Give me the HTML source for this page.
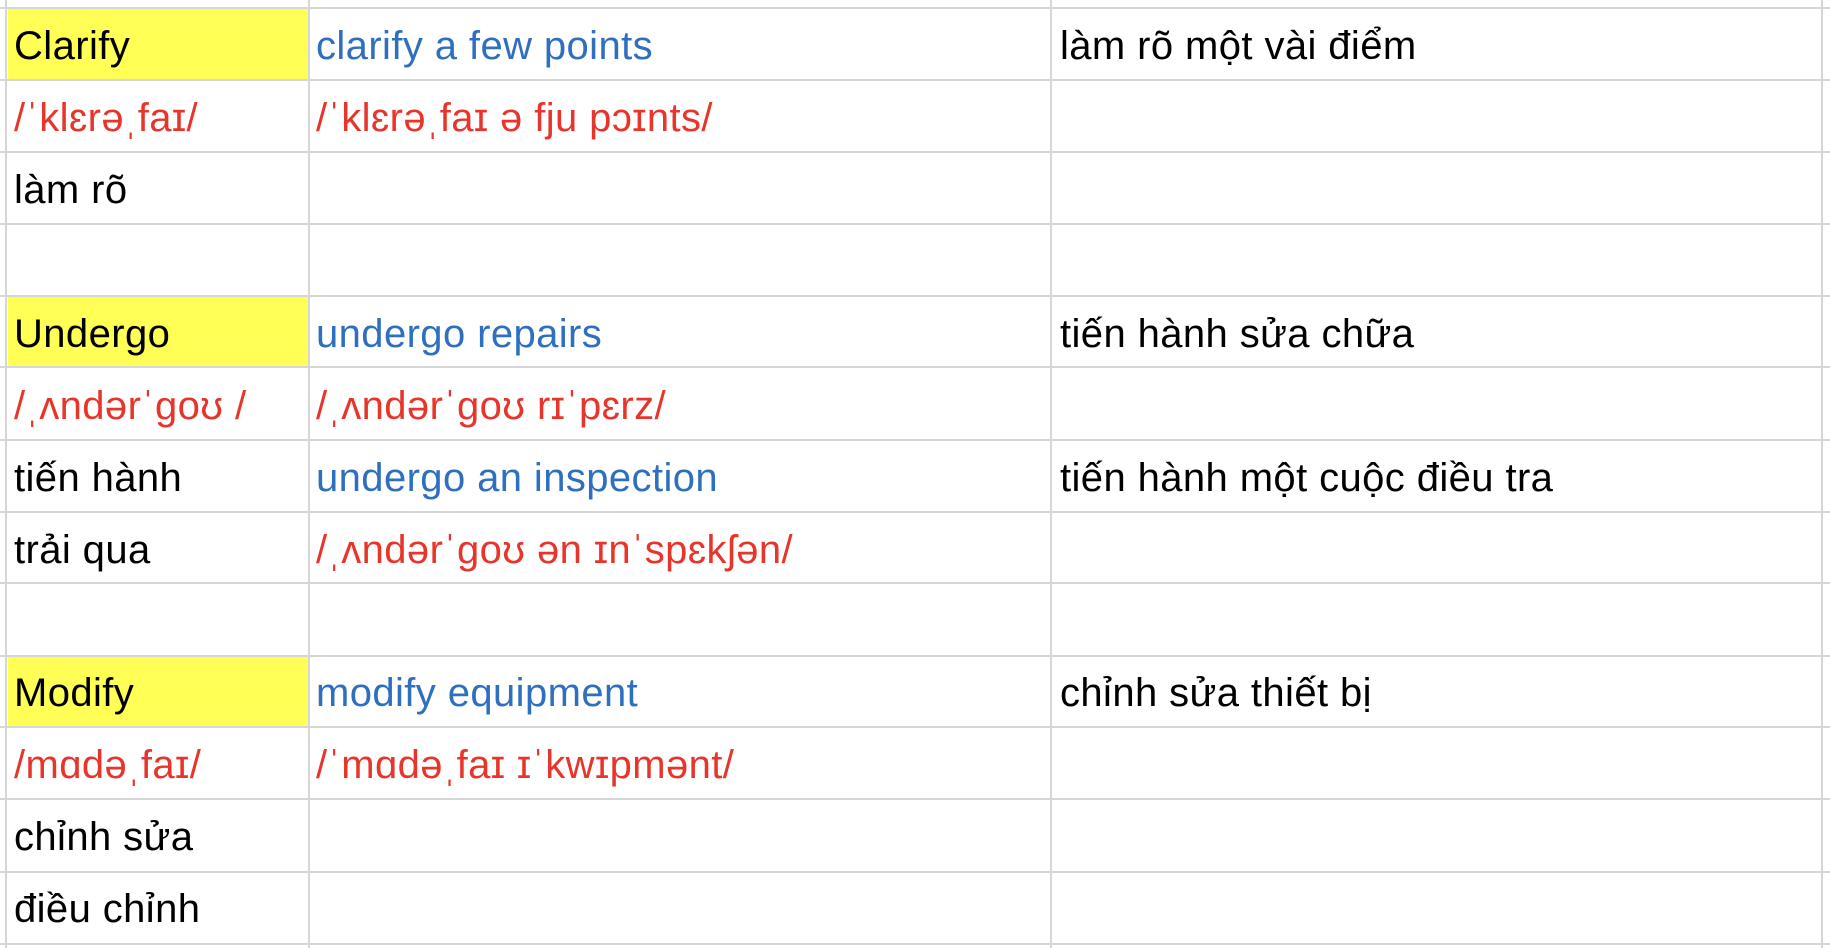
<!DOCTYPE html>
<html><head><meta charset="utf-8"><style>
body{margin:0;width:1830px;height:948px;background:#fff;overflow:hidden;font-family:"Liberation Sans","DejaVu Sans",sans-serif;}
.v{position:absolute;top:0;height:948px;width:2px;background:#d6d6d6}
.h{position:absolute;left:0;width:1830px;height:2px;background:#d6d6d6}
.t{position:absolute;font-size:40px;line-height:40px;white-space:nowrap;letter-spacing:0.4px;margin-top:2px}
.b{color:#2f6fbf}.r{color:#e8352b}.k{color:#000}
.y{position:absolute;left:8px;top:9px;width:301px;height:70px;background:#ffff55}
</style></head><body>
<div class="y"></div>
<div class="y" style="top:297px"></div>
<div class="y" style="top:656px"></div>
<div class="v" style="left:5px"></div>
<div class="v" style="left:308px"></div>
<div class="v" style="left:1050px"></div>
<div class="v" style="left:1821px"></div>
<div class="h" style="top:7px"></div>
<div class="h" style="top:79px"></div>
<div class="h" style="top:151px"></div>
<div class="h" style="top:223px"></div>
<div class="h" style="top:295px"></div>
<div class="h" style="top:366px"></div>
<div class="h" style="top:439px"></div>
<div class="h" style="top:511px"></div>
<div class="h" style="top:582px"></div>
<div class="h" style="top:655px"></div>
<div class="h" style="top:726px"></div>
<div class="h" style="top:798px"></div>
<div class="h" style="top:871px"></div>
<div class="h" style="top:943px"></div>

<div class="t k" style="left:14px;top:24px">Clarify</div>
<div class="t b" style="left:316px;top:24px">clarify a few points</div>
<div class="t k" style="left:1060px;top:24px">làm rõ một vài điểm</div>
<div class="t r" style="left:14px;top:96px">/ˈklɛrəˌfaɪ/</div>
<div class="t r" style="left:316px;top:96px">/ˈklɛrəˌfaɪ ə fju pɔɪnts/</div>
<div class="t k" style="left:14px;top:168px">làm rõ</div>

<div class="t k" style="left:14px;top:312px">Undergo</div>
<div class="t b" style="left:316px;top:312px">undergo repairs</div>
<div class="t k" style="left:1060px;top:312px">tiến hành sửa chữa</div>
<div class="t r" style="left:14px;top:384px">/ˌʌndərˈgoʊ /</div>
<div class="t r" style="left:316px;top:384px">/ˌʌndərˈgoʊ rɪˈpɛrz/</div>
<div class="t k" style="left:14px;top:456px">tiến hành</div>
<div class="t b" style="left:316px;top:456px">undergo an inspection</div>
<div class="t k" style="left:1060px;top:456px">tiến hành một cuộc điều tra</div>
<div class="t k" style="left:14px;top:528px">trải qua</div>
<div class="t r" style="left:316px;top:528px">/ˌʌndərˈgoʊ ən ɪnˈspɛkʃən/</div>

<div class="t k" style="left:14px;top:671px">Modify</div>
<div class="t b" style="left:316px;top:671px">modify equipment</div>
<div class="t k" style="left:1060px;top:671px">chỉnh sửa thiết bị</div>
<div class="t r" style="left:14px;top:743px">/mɑdəˌfaɪ/</div>
<div class="t r" style="left:316px;top:743px">/ˈmɑdəˌfaɪ ɪˈkwɪpmənt/</div>
<div class="t k" style="left:14px;top:815px">chỉnh sửa</div>
<div class="t k" style="left:14px;top:887px">điều chỉnh</div>
</body></html>
